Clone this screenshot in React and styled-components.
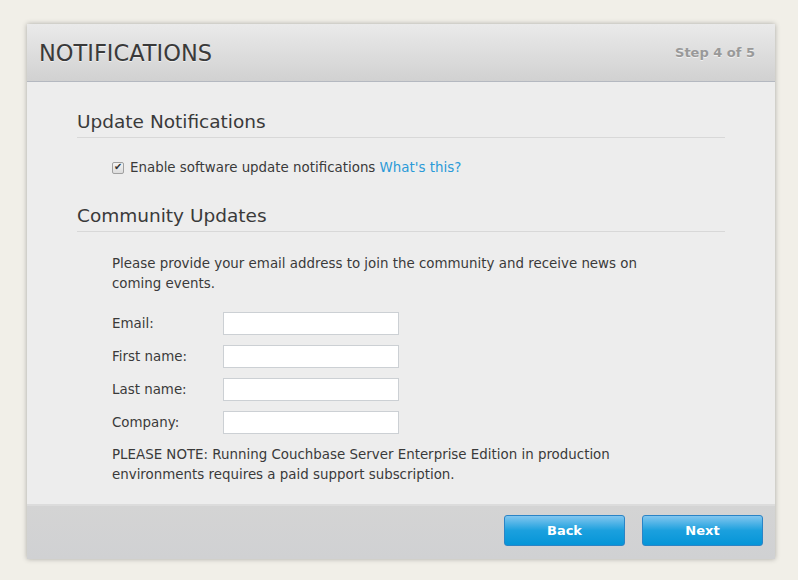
import React, { useState } from 'react'
import styled, { createGlobalStyle } from 'styled-components'

const Global = createGlobalStyle`
    html, body {
        margin: 0;
        padding: 0;
        background: #f1efe8;
    }
    body {
        font-family: "DejaVu Sans", Verdana, sans-serif;
        color: #3a3a3a;
    }
`

function App() {
    const [updates, setUpdates] = useState(true)
    const fields = ['Email:', 'First name:', 'Last name:', 'Company:']
    return (
        <Page>
            <Global />
            <Dialog>
                <Header>
                    <Title>NOTIFICATIONS</Title>
                    <Step>Step 4 of 5</Step>
                </Header>
                <Body>
                    <Section>
                        <Heading>Update Notifications</Heading>
                        <CheckRow>
                            <Check type="checkbox" checked={updates} onChange={e => setUpdates(e.target.checked)} />
                            <span>Enable software update notifications <Link href="#">What's this?</Link></span>
                        </CheckRow>
                    </Section>
                    <Section>
                        <Heading>Community Updates</Heading>
                        <Indent>
                            <Text>Please provide your email address to join the community and receive news on coming events.</Text>
                            <Form>
                                {fields.map(f => (
                                    <FieldRow key={f}>
                                        <Label>{f}</Label>
                                        <Input type="text" />
                                    </FieldRow>
                                ))}
                            </Form>
                            <Text>PLEASE NOTE: Running Couchbase Server Enterprise Edition in production environments requires a paid support subscription.</Text>
                        </Indent>
                    </Section>
                </Body>
                <Footer>
                    <Button>Back</Button>
                    <Button>Next</Button>
                </Footer>
            </Dialog>
        </Page>
    )
}

export default App

const Page = styled.div`
    width: 798px;
    height: 580px;
    padding: 24px 0 0 27px;
    box-sizing: border-box;
`
const Dialog = styled.div`
    width: 748px;
    height: 535px;
    display: flex;
    flex-direction: column;
    background: #ededed;
    box-shadow: 0 0 5px rgba(0,0,0,0.3);
`
const Header = styled.div`
    height: 57px;
    flex-shrink: 0;
    display: flex;
    align-items: center;
    justify-content: space-between;
    padding: 0 20px 0 12px;
    background: linear-gradient(#eaeaea, #d1d1d1);
    border-bottom: 1px solid #b4b8c0;
`
const Title = styled.h1`
    margin: 0;
    font-size: 22.5px;
    font-weight: normal;
    color: #3a3a3a;
    text-shadow: 0 1px 0 rgba(255,255,255,0.6);
`
const Step = styled.div`
    font-size: 13px;
    font-weight: bold;
    color: #999;
    text-shadow: 0 1px 0 rgba(255,255,255,0.6);
`
const Body = styled.div`
    flex: 1;
    min-height: 0;
    overflow: hidden;
    padding: 29px 50px 0 50px;
`
const Section = styled.div`
    margin-bottom: 30px;
`
const Heading = styled.h2`
    margin: 0 0 22px;
    padding-bottom: 5px;
    font-size: 18.5px;
    font-weight: normal;
    color: #3a3a3a;
    border-bottom: 1px solid #d8d8d8;
`
const CheckRow = styled.label`
    display: flex;
    align-items: center;
    gap: 6px;
    padding-left: 35px;
    font-size: 13.4px;
`
const Check = styled.input`
    appearance: none;
    margin: 0;
    width: 12px;
    height: 12px;
    border: 1px solid #a0a0a0;
    border-radius: 2px;
    background: linear-gradient(#f4f4f4, #dcdcdc);
    position: relative;
    &:checked::after {
        content: '✔';
        position: absolute;
        left: 1px;
        top: -2px;
        font-size: 10px;
        color: #333;
    }
`
const Link = styled.a`
    color: #2a9ad8;
    text-decoration: none;
`
const Indent = styled.div`
    padding: 0 80px 0 35px;
`
const Text = styled.p`
    margin: 0;
    font-size: 13.4px;
    line-height: 20px;
`
const Form = styled.div`
    display: flex;
    flex-direction: column;
    gap: 10px;
    margin: 18px 0 11px;
`
const FieldRow = styled.div`
    display: flex;
    align-items: center;
`
const Label = styled.span`
    width: 111px;
    font-size: 13.4px;
`
const Input = styled.input`
    width: 176px;
    height: 23px;
    box-sizing: border-box;
    border: 1px solid #ccd0d4;
    background: #fff;
    margin: 0;
`
const Footer = styled.div`
    height: 55px;
    flex-shrink: 0;
    box-sizing: border-box;
    display: flex;
    align-items: flex-start;
    justify-content: flex-end;
    gap: 17px;
    padding: 9px 12px 0;
    background: linear-gradient(#d4d4d4, #d0d1d3);
    border-top: 2px solid #dcdcdc;
`
const Button = styled.button`
    width: 121px;
    height: 31px;
    border: 1px solid #2a84c6;
    border-radius: 3px;
    background: linear-gradient(#82c6ef, #1ba0de 50%, #0595d8);
    color: #fff;
    font-family: "DejaVu Sans", Verdana, sans-serif;
    font-size: 13px;
    font-weight: bold;
    cursor: pointer;
`
